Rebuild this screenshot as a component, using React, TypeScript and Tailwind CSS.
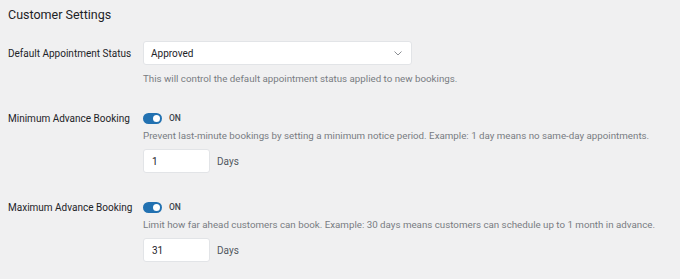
import React from "react";

function Toggle() {
  return (
    <div className="flex items-center h-[14px]">
      <div className="relative w-[19px] h-[11px] rounded-full bg-[#2271b1]">
        <div className="absolute right-[2px] top-[2px] w-[7px] h-[7px] rounded-full bg-white" />
      </div>
      <span className="ml-[7px] text-[8.5px] font-medium text-[#3c434a] leading-none">ON</span>
    </div>
  );
}

function NumberField({ value }: { value: string }) {
  return (
    <div className="flex items-center mt-[7px]">
      <div className="w-[67px] h-[24px] bg-white border border-[#e2e4e7] rounded-[3px] flex items-center pl-[8px] text-[10px] text-[#1d2327]">
        {value}
      </div>
      <span className="ml-[7px] text-[10px] text-[#50575e]">Days</span>
    </div>
  );
}

export default function App() {
  return (
    <div
      className="w-[680px] h-[279px] bg-[#f0f0f1] pl-2 pt-[6px] text-[#1d2327] overflow-hidden"
      style={{ fontFamily: "Roboto, 'Liberation Sans', sans-serif" }}
    >
      <h2 className="text-[12.5px] leading-[18px] font-normal text-[#1d2327] whitespace-nowrap">Customer Settings</h2>

      <div className="grid grid-cols-[135px_1fr] mt-[17px]">
        <div className="h-[24px] flex items-center text-[10px] text-[#1d2327] whitespace-nowrap">Default Appointment Status</div>
        <div>
          <div className="w-[269px] h-[24px] bg-white border border-[#e2e4e7] rounded-[3px] flex items-center justify-between pl-[7px] pr-[9px]">
            <span className="text-[10px] text-[#1d2327]">Approved</span>
            <svg width="8" height="5" viewBox="0 0 8 5" fill="none" className="mt-[1px]">
              <path d="M0.5 0.5L4 4L7.5 0.5" stroke="#8c8f94" strokeWidth="1" />
            </svg>
          </div>
          <p className="mt-[7px] leading-[13px] text-[9.75px] text-[#787c82] whitespace-nowrap">
            This will control the default appointment status applied to new bookings.
          </p>
        </div>
      </div>

      <div className="grid grid-cols-[135px_1fr] mt-[26px]">
        <div className="h-[14px] flex items-center text-[10px] text-[#1d2327] whitespace-nowrap">Minimum Advance Booking</div>
        <div>
          <Toggle />
          <p className="mt-[4px] leading-[13px] text-[9.75px] text-[#787c82] whitespace-nowrap">
            Prevent last-minute bookings by setting a minimum notice period. Example: 1 day means no same-day appointments.
          </p>
          <NumberField value="1" />
        </div>
      </div>

      <div className="grid grid-cols-[135px_1fr] mt-[27px]">
        <div className="h-[14px] flex items-center text-[10px] text-[#1d2327] whitespace-nowrap">Maximum Advance Booking</div>
        <div>
          <Toggle />
          <p className="mt-[4px] leading-[13px] text-[9.75px] text-[#787c82] whitespace-nowrap">
            Limit how far ahead customers can book. Example: 30 days means customers can schedule up to 1 month in advance.
          </p>
          <NumberField value="31" />
        </div>
      </div>
    </div>
  );
}
